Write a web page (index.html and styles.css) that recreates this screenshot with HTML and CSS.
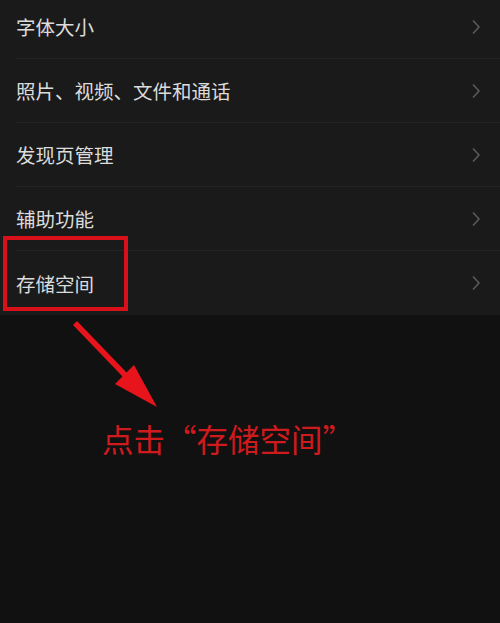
FILE: index.html
```html
<!DOCTYPE html>
<html lang="zh">
<head>
<meta charset="utf-8">
<link rel="stylesheet" href="styles.css">
</head>
<body>
<div class="page">
  <ul class="list">
    <li class="row"><span class="label">字体大小</span><svg class="chev" viewBox="0 0 10 16"><path d="M2 1.5 L8 8 L2 14.5"/></svg></li>
    <li class="row"><span class="label">照片、视频、文件和通话</span><svg class="chev" viewBox="0 0 10 16"><path d="M2 1.5 L8 8 L2 14.5"/></svg></li>
    <li class="row"><span class="label">发现页管理</span><svg class="chev" viewBox="0 0 10 16"><path d="M2 1.5 L8 8 L2 14.5"/></svg></li>
    <li class="row"><span class="label">辅助功能</span><svg class="chev" viewBox="0 0 10 16"><path d="M2 1.5 L8 8 L2 14.5"/></svg></li>
    <li class="row"><span class="label">存储空间</span><svg class="chev" viewBox="0 0 10 16"><path d="M2 1.5 L8 8 L2 14.5"/></svg></li>
  </ul>
  <div class="highlight"></div>
  <svg class="arrow" viewBox="0 0 500 623" width="500" height="623">
    <line x1="75" y1="328" x2="126" y2="381" class="shaft"/>
    <polygon points="157,412 115,389 134,370" class="head"/>
  </svg>
  <p class="caption">点击“存储空间”</p>
</div>
</body>
</html>
```
FILE: styles.css
```css
html, body {
  margin: 0;
  padding: 0;
  background: #111111;
}
body {
  width: 500px;
  height: 623px;
  overflow: hidden;
  font-family: "Noto Sans CJK SC", "Noto Sans", sans-serif;
}
.page {
  position: relative;
  width: 500px;
  height: 623px;
}
.list {
  list-style: none;
  margin: -5px 0 0 0;
  padding: 0;
  background: #1a1a1a;
}
.row {
  height: 64px;
  display: flex;
  align-items: center;
  justify-content: space-between;
  margin-left: 16px;
  padding-right: 19px;
  box-sizing: border-box;
  border-bottom: 1px solid #242424;
}
.row:last-child {
  border-bottom: none;
}
.label {
  color: #dcdcdc;
  font-size: 19.5px;
  letter-spacing: 0;
}
.chev {
  width: 10px;
  height: 16px;
  fill: none;
  stroke: #5a5a5a;
  stroke-width: 1.6;
}
.highlight {
  position: absolute;
  left: 3px;
  top: 241px;
  width: 117px;
  height: 67px;
  border: 4px solid #d8101a;
}
.arrow {
  position: absolute;
  left: 0;
  top: 0;
}
.shaft {
  stroke: #e8141c;
  stroke-width: 5.5;
}
.head {
  fill: #e8141c;
}
.caption {
  margin: 0;
  position: absolute;
  left: 102px;
  top: 421px;
  font-size: 31.5px;
  line-height: 44px;
  color: #cf1a1e;
}
```
